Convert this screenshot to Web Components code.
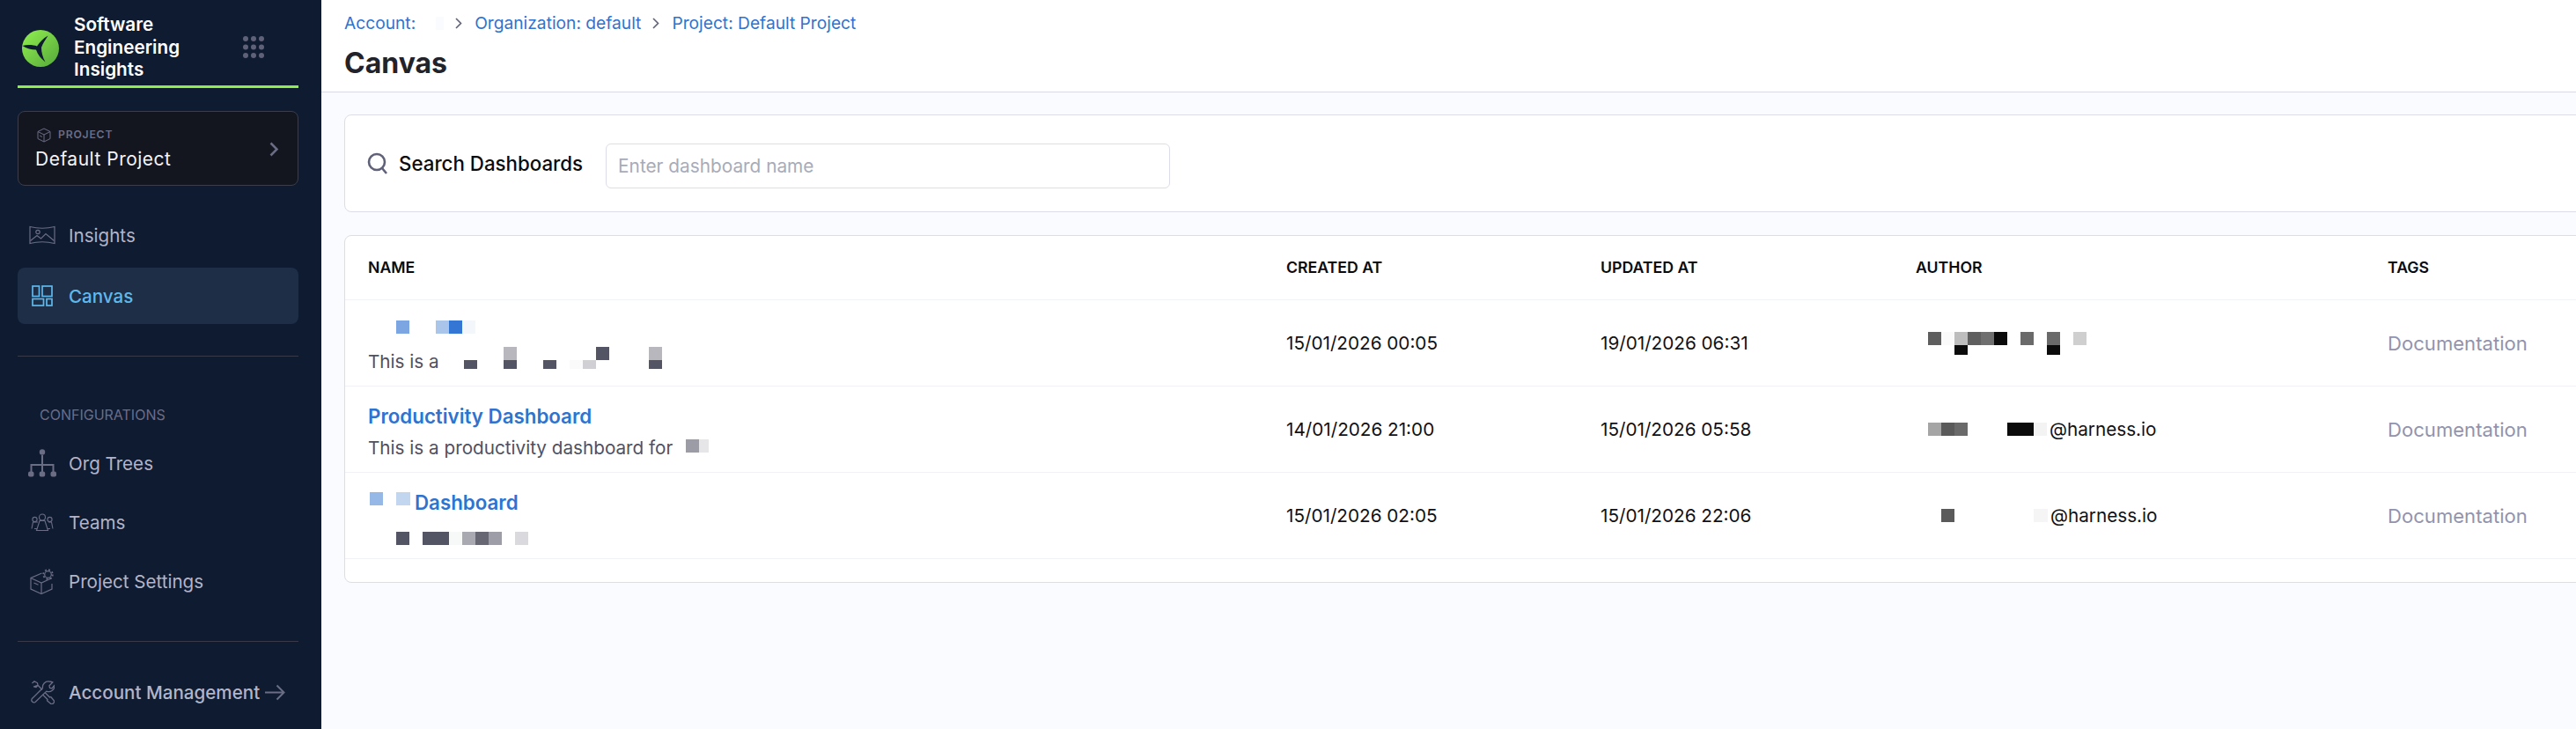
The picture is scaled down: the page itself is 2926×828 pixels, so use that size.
<!DOCTYPE html>
<html lang='en'>

<head>
  <meta charset='UTF-8'>
  <meta name='viewport' content='width=device-width, initial-scale=1.0'>
  <title>Canvas</title>
  <style>
    html, body { margin: 0; height: 100%; overflow: hidden; }
    body { font-family: Inter, "Liberation Sans", sans-serif; }
  </style>
</head>

<body>
  <app-shell>
    <side-bar slot="side">
      <nav-item style="margin-bottom:5px">
        <svg slot="icon" width="30" height="22" viewBox="0 0 30 22" fill="none" stroke="#6b6d85" stroke-width="1.200"><path d="M1 1.500Q15 5 29 1.500V20.500Q15 17 1 20.500Z"/><circle cx="10" cy="7.500" r="2.200"/><path d="M1.500 17.500L9 11.500l4.500 3.500 5.500-5.500 9.500 8"/></svg>
        Insights
      </nav-item>
      <nav-item active>
        <svg slot="icon" width="24" height="24" viewBox="0 0 24 24" fill="none" stroke="#5fb8ec" stroke-width="1.700"><rect x="1" y="1" width="7.500" height="11.500"/><rect x="12" y="1" width="11" height="11.500"/><rect x="1" y="15.500" width="12.500" height="7.500"/><rect x="17" y="15.500" width="6" height="7.500"/></svg>
        Canvas
      </nav-item>
      <side-rule></side-rule>
      <side-heading>CONFIGURATIONS</side-heading>
      <nav-item>
        <svg slot="icon" width="32" height="32" viewBox="0 0 32 32" fill="none"><circle cx="16" cy="3.500" r="3.200" fill="#6b6d85"/><path d="M16 7V26M3.500 26V18H28.500V26" stroke="#6b6d85" stroke-width="2"/><rect x="0" y="25.500" width="6.500" height="6" rx="2" fill="#6b6d85"/><rect x="12.700" y="25.500" width="6.500" height="6" rx="2" fill="#6b6d85"/><rect x="25.500" y="25.500" width="6.500" height="6" rx="2" fill="#6b6d85"/></svg>
        Org Trees
      </nav-item>
      <nav-item>
        <svg slot="icon" width="26" height="20" viewBox="0 0 26 20" fill="none" stroke="#6b6d85" stroke-width="1.100"><circle cx="13" cy="4.500" r="3.500"/><path d="M6.500 19.500l3.500-11h6l3.500 11Z"/><circle cx="4.500" cy="7" r="2.600"/><path d="M1 17.500l1.500-7.500h3.500l2 0M4 17.500H7"/><circle cx="21.500" cy="7" r="2.600"/><path d="M25 17.500l-1.500-7.500h-3.500M22 17.500H19"/></svg>
        Teams
      </nav-item>
      <nav-item>
        <svg slot="icon" width="28" height="29" viewBox="0 0 28 29" fill="none" stroke="#6b6d85" stroke-width="1.200"><path d="M13.500 5L1 10.500V23l12 5.500 12-5.500V17"/><path d="M1 10.500l12 5.500 12-5.500M13 16V28.500"/><path d="M4.500 16l5 2.300"/><circle cx="20.500" cy="6.500" r="3.800"/><circle cx="20.500" cy="6.500" r="5.300" stroke-width="1.800" stroke-dasharray="1.900 2.260"/></svg>
        Project Settings
      </nav-item>
      <side-rule></side-rule>
      <nav-item strong>
        <svg slot="icon" width="27" height="27" viewBox="0 0 27 27" fill="none" stroke="#6b6d85" stroke-width="1.300" stroke-linejoin="round"><path d="M1.500 3L4 .8l3.500 2 .5 2.500L13 10.500M16 13.500l5.500 5.500 1.200-.500 3 3.500a2.500 2.500 0 0 1-3.700 3.700l-3.500-3 .500-1.200-5.500-5.500M8 5.300L6 7.500 3.500 6.800Z"/><path d="M25 1.800l-4 4 .500 2.500 2.500.500 2.800-3.500a6.500 6.500 0 0 1-9 6.800L5 24.500a2.800 2.800 0 0 1-3.800-3.800L13.500 8.500a6.500 6.500 0 0 1 7-7.500c2 0 3 .300 4.500.800Z"/></svg>
        Account Management
        <svg slot="end" width="23" height="19" viewBox="0 0 23 19" fill="none" stroke="#6b6d85" stroke-width="2"><path d="M0 9.500H21M13.500 1.500l8 8-8 8"/></svg>
      </nav-item>
    </side-bar>

    <page-head></page-head>
    <search-card></search-card>

    <dash-table>
      <dash-row>
        <pixel-strip slot="title" style="margin:0 0 5px 32px" cells="15 #7ca6e2,30,15 #a9c6ea,15 #3476d3,15 #f3f7fc"></pixel-strip>
        <span slot="desc">This is a</span>
        <pixel-strip slot="desc" style="margin:0 0 7px 28px" cells="15 - #535464,30,15 #b8b7bd #535464,30,15 - #535464,15,15 - #fafafa,15 - #d0cfd4,15 #535464,45,15 #b8b7bd #535464"></pixel-strip>
        <span slot="created">15/01/2026 00:05</span>
        <span slot="updated">19/01/2026 06:31</span>
        <pixel-strip slot="author" low="11" style="margin:0 0 0 14px" cells="15 #5e5e5e,15 #fafafa,15 #bdbdbd #0b0b0b,15 #5f5f5f,15 #6f6f6f,15 #0b0b0b,15,15 #6a6a6a,15,15 #6a6a6a #0b0b0b,15,15 #cfcfcf"></pixel-strip>
        <span slot="tags">Documentation</span>
      </dash-row>
      <dash-row>
        <a slot="title">Productivity Dashboard</a>
        <span slot="desc">This is a productivity dashboard for</span>
        <pixel-strip slot="desc" style="margin:0 0 3px 15px" cells="15 #9c9ca6,11 #e6e6e9"></pixel-strip>
        <span slot="created">14/01/2026 21:00</span>
        <span slot="updated">15/01/2026 05:58</span>
        <pixel-strip slot="author" style="margin:0 0 0 14px" cells="15 #a5a5a5,15 #5a5a5a,15 #6a6a6a,45,30 #0b0b0b,15 #f3f3f3,3"></pixel-strip>
        <span slot="author">@harness.io</span>
        <span slot="tags">Documentation</span>
      </dash-row>
      <dash-row>
        <pixel-strip slot="title" style="margin:0 5px 7px 2px" cells="15 #95b8e6,15,16 #c3d6f0"></pixel-strip>
        <a slot="title">Dashboard</a>
        <pixel-strip slot="desc" style="margin:11px 0 0 32px" cells="15 #535464,15,30 #535464,15 #f7f8f8,15 #a9a9b1,15 #666773,15 #9d9da7,15,15 #d9d9de"></pixel-strip>
        <span slot="created">15/01/2026 02:05</span>
        <span slot="updated">15/01/2026 22:06</span>
        <pixel-strip slot="author" style="margin:0 0 0 14px" cells="15,15 #5a5a5a,90,16 #f5f5f5,3"></pixel-strip>
        <span slot="author">@harness.io</span>
        <span slot="tags">Documentation</span>
      </dash-row>
    </dash-table>
  </app-shell>

  <script>
    // small helper so every element just declares its shadow markup
    function shadow(el, html) {
      el.attachShadow({ mode: "open" }).innerHTML = html
    }

    customElements.define("app-shell", class extends HTMLElement {
      constructor() {
        super()
        shadow(this, `
          <style>
            :host { display: flex; height: 828px; overflow: hidden; background: #fafbfe; }
            .main { flex: 1; min-width: 0; display: flex; flex-direction: column; overflow: hidden; }
          </style>
          <slot name="side"></slot>
          <div class="main"><slot></slot></div>`)
      }
    })

    customElements.define("side-bar", class extends HTMLElement {
      constructor() {
        super()
        shadow(this, `
          <style>
            :host { display: block; box-sizing: border-box; flex: 0 0 365px; width: 365px; height: 828px; padding: 0 25px 0 20px; background: #0e1b31; color: #fff; }
            .brand { height: 97px; border-bottom: 3px solid #8fed4e; width: 319px; display: flex; align-items: center; box-sizing: content-box; }
            .logo { margin: 13px 0 0 5px; }
            .name { margin: 10px 0 0 17px; width: 170px; font-size: 20.700px; line-height: 25.500px; font-weight: 600; }
            .dots { margin: 10px 0 0 22px; }
            .project { box-sizing: border-box; width: 319px; height: 85px; margin: 26px 0 24px; padding: 17px 19px 0; border: 1px solid #3b3d4b; border-radius: 8px; background: #14161f; position: relative; }
            .label { display: flex; align-items: center; gap: 8px; font-size: 12.200px; line-height: 18px; letter-spacing: .8px; font-weight: 600; color: #6b6d85; }
            .label svg { margin-left: 2px; }
            .value { margin-top: 6px; font-size: 21px; line-height: 26px; font-weight: 400; color: #f3f3fa; letter-spacing: .5px; }
            .chev { position: absolute; right: 21px; top: 34px; }
            ::slotted(nav-item) { margin-bottom: 3px; }
          </style>
          <div class="brand">
            <svg class="logo" width="42" height="42" viewBox="0 0 42 42">
              <defs><linearGradient id="lg" x1="0" y1="0" x2="1" y2="1"><stop offset="0" stop-color="#92f050"/><stop offset="1" stop-color="#55a83a"/></linearGradient></defs>
              <circle cx="21" cy="21" r="21" fill="url(#lg)"/>
              <path d="M.5 18C6 16.500 13 17 17 18.500C20 14 24 9.500 29.500 6.500C27 10.500 23.500 15.500 22 20C22 25.500 23.500 31 26.500 36.500C21.500 32.500 17.500 27.500 16 22.500C11 22.500 5 21 .5 18Z" fill="#0e1b31"/>
            </svg>
            <div class="name">Software Engineering Insights</div>
            <svg class="dots" width="24" height="25" viewBox="0 0 24 25" fill="#5f6178">
              <circle cx="3" cy="3" r="3"/><circle cx="12" cy="3" r="3"/><circle cx="21" cy="3" r="3"/>
              <circle cx="3" cy="12.500" r="3"/><circle cx="12" cy="12.500" r="3"/><circle cx="21" cy="12.500" r="3"/>
              <circle cx="3" cy="22" r="3"/><circle cx="12" cy="22" r="3"/><circle cx="21" cy="22" r="3"/>
            </svg>
          </div>
          <div class="project">
            <div class="label">
              <svg width="16" height="17" viewBox="0 0 16 17" fill="none" stroke="#6b6d85" stroke-width="1"><path d="M8 1l7 3.500v8L8 16l-7-3.500v-8ZM1 4.500L8 8l7-3.500M8 8v8M3 9l3 1.500"/></svg>
              PROJECT
            </div>
            <div class="value">Default Project</div>
            <svg class="chev" width="11" height="17" viewBox="0 0 11 17" fill="none" stroke="#6b6d85" stroke-width="2.500"><path d="M1.500 1.500l7 7-7 7"/></svg>
          </div>
          <slot></slot>`)
      }
    })

    customElements.define("nav-item", class extends HTMLElement {
      constructor() {
        super()
        shadow(this, `
          <style>
            :host { display: flex; align-items: center; box-sizing: border-box; width: 319px; height: 64px; padding-left: 12px; border-radius: 8px; font-size: 20.600px; color: #b3b4c7; }
            :host([active]) { background: #1e2e46; color: #5fb8ec; font-weight: 500; }
            :host([strong]) { font-weight: 500; }
            .icon { flex: 0 0 32px; display: flex; justify-content: center; align-items: center; margin-right: 14px; }
            .end { margin-left: 6px; display: flex; }
          </style>
          <span class="icon"><slot name="icon"></slot></span>
          <slot></slot>
          <span class="end"><slot name="end"></slot></span>`)
      }
    })

    customElements.define("side-rule", class extends HTMLElement {
      constructor() {
        super()
        shadow(this, `<style>:host { display: block; width: 319px; height: 1px; margin: 36px 0 25px; background: #383a4a; }</style>`)
      }
    })

    customElements.define("side-heading", class extends HTMLElement {
      constructor() {
        super()
        shadow(this, `<style>:host { display: block; margin: 54px 0 11px 25px; font-size: 16px; line-height: 24px; color: #6b6d85; }</style><slot></slot>`)
      }
    })

    customElements.define("page-head", class extends HTMLElement {
      constructor() {
        super()
        shadow(this, `
          <style>
            :host { display: block; box-sizing: border-box; height: 105px; padding: 14px 0 0 26px; background: #fff; border-bottom: 1px solid #d9dae5; }
            .crumbs { display: flex; align-items: center; height: 24px; font-size: 19.200px; color: #2f73cf; }
            .mask { width: 9px; height: 15px; margin-left: 23px; background: #fafbff; }
            svg { margin: 0 14px 0 13px; }
            h1 { margin: 14px 0 0; font-size: 32px; line-height: 40px; font-weight: 700; color: #22222a; }
          </style>
          <div class="crumbs">
            <span>Account:</span><i class="mask"></i>
            <svg width="8" height="13" viewBox="0 0 8 13" fill="none" stroke="#5f6178" stroke-width="1.600"><path d="M1 1l5.500 5.500L1 12"/></svg>
            <span>Organization: default</span>
            <svg width="8" height="13" viewBox="0 0 8 13" fill="none" stroke="#5f6178" stroke-width="1.600"><path d="M1 1l5.500 5.500L1 12"/></svg>
            <span>Project: Default Project</span>
          </div>
          <h1>Canvas</h1>`)
      }
    })

    customElements.define("search-card", class extends HTMLElement {
      constructor() {
        super()
        shadow(this, `
          <style>
            :host { display: flex; align-items: center; box-sizing: border-box; flex: none; height: 111px; margin: 25px -20px 0 26px; padding-left: 25px; background: #fff; border: 1px solid #dcdde8; border-radius: 8px; }
            .label { margin: 0 26px 0 12px; font-size: 22.300px; font-weight: 500; color: #0b0b0d; }
            input { box-sizing: border-box; width: 641px; height: 51px; margin-top: 6px; padding: 0 13px; border: 1px solid #dcdde8; border-radius: 6px; font: 20.800px Inter, sans-serif; outline: none; background: #fff; }
            input::placeholder { color: #a8abb8; opacity: 1; }
          </style>
          <svg width="24" height="26" viewBox="0 0 24 26" fill="none" stroke="#5f6178" stroke-width="2.600"><circle cx="11" cy="11" r="9"/><path d="M17 18l5 6"/></svg>
          <span class="label">Search Dashboards</span>
          <input placeholder="Enter dashboard name">`)
      }
    })

    const COLUMNS = "1043px 357px 358px 536px 1fr"

    customElements.define("dash-table", class extends HTMLElement {
      constructor() {
        super()
        shadow(this, `
          <style>
            :host { display: block; box-sizing: border-box; flex: none; height: 395px; margin: 26px -20px 0 26px; background: #fff; border: 1px solid #dcdde8; border-radius: 8px; }
            .head { display: grid; grid-template-columns: ${COLUMNS}; align-items: center; box-sizing: border-box; height: 73px; padding: 0 0 2px 26px; border-bottom: 1px solid #f1f2f8; font-size: 17.700px; font-weight: 600; color: #0b0b0d; }
          </style>
          <div class="head"><span>NAME</span><span>CREATED AT</span><span>UPDATED AT</span><span>AUTHOR</span><span>TAGS</span></div>
          <slot></slot>`)
      }
    })

    customElements.define("dash-row", class extends HTMLElement {
      constructor() {
        super()
        shadow(this, `
          <style>
            :host { display: grid; grid-template-columns: ${COLUMNS}; align-items: center; box-sizing: border-box; height: 98px; padding-left: 26px; border-bottom: 1px solid #f1f2f8; font-size: 20.700px; color: #111114; }
            .name { align-self: start; padding-top: 16px; }
            .line { display: flex; align-items: center; }
            .title { height: 34px; font-size: 22.300px; font-weight: 600; color: #2f73cf; }
            .desc { height: 36px; margin-top: 1px; color: #4f5162; }
            .author { display: flex; align-items: center; }
            .tags { font-size: 22.100px; color: #9293ad; }
          </style>
          <div class="name">
            <div class="line title"><slot name="title"></slot></div>
            <div class="line desc"><slot name="desc"></slot></div>
          </div>
          <div><slot name="created"></slot></div>
          <div><slot name="updated"></slot></div>
          <div class="author"><slot name="author"></slot></div>
          <div class="tags"><slot name="tags"></slot></div>`)
      }
    })

    // mosaic squares that cover redacted text in the reference
    // each cell is "width top bottom"; no colour leaves a gap, "-" leaves the top half empty
    customElements.define("pixel-strip", class extends HTMLElement {
      constructor() {
        super()
        const low = this.getAttribute("low") || 10
        const cells = (this.getAttribute("cells") || "").split(",").map((c) => {
          const [w, top, bottom] = c.trim().split(" ")
          const t = top && top !== "-" ? `background:${top}` : ""
          const b = bottom ? `<i style="height:${low}px;background:${bottom}"></i>` : ""
          return `<span style="width:${w}px"><i style="height:15px;${t}"></i>${b}</span>`
        })
        shadow(this, `
          <style>
            :host { display: inline-flex; flex: none; align-items: flex-start; }
            span { display: block; }
            i { display: block; }
          </style>
          ${cells.join("")}`)
      }
    })
  </script>
</body>

</html>
